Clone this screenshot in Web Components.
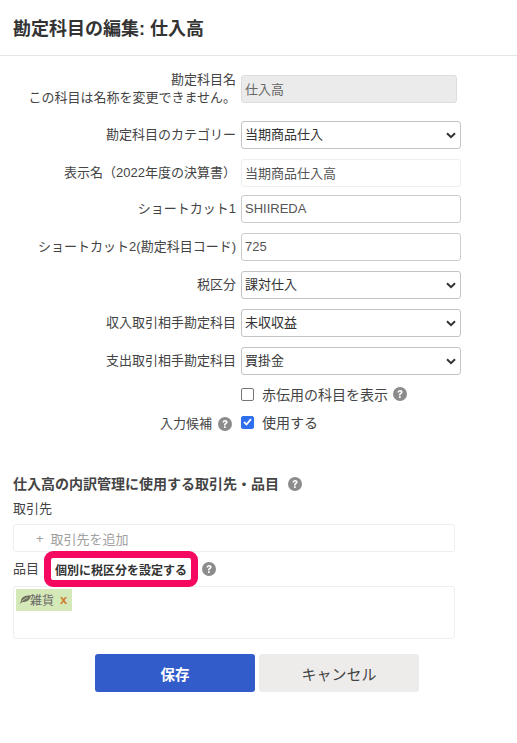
<!DOCTYPE html>
<html lang="ja">
<head>
<meta charset="utf-8">
<title>勘定科目の編集</title>
<style>
  html, body { margin: 0; background: #fff; }
  body {
    font-family: "Liberation Sans", "Noto Sans CJK JP", sans-serif;
    font-size: 13px;
    color: #333;
  }
</style>
</head>
<body>
<account-edit-page></account-edit-page>

<script>
const HELP_ICON = `<svg viewBox="0 0 14 14" width="14" height="14" aria-hidden="true">
  <circle cx="7" cy="7" r="7" fill="#8c8c8c"/>
  <path d="M4.500 5.500c0-1.600 1.100-2.500 2.600-2.500 1.500 0 2.500.9 2.500 2.100 0 1.100-.6 1.600-1.300 2-.5.3-.7.5-.7 1v.3H6v-.5c0-.9.400-1.300 1-1.700.5-.3.800-.6.800-1 0-.5-.3-.8-.8-.8-.6 0-.8.400-.9 1.100zM6 9.300h1.700V11H6z" fill="#fff"/>
</svg>`;

/** Ayuda: icono redondo con signo de interrogación */
class HelpIcon extends HTMLElement {
  connectedCallback() {
    if (this.shadowRoot) return;
    this.attachShadow({ mode: "open" }).innerHTML = `
      <style>
        :host { display: inline-flex; width: 14px; height: 14px; flex: none; }
      </style>
      ${HELP_ICON}`;
  }
}

/** Fila del formulario: etiqueta a la derecha + control */
class FormRow extends HTMLElement {
  connectedCallback() {
    if (this.shadowRoot) return;
    this.attachShadow({ mode: "open" }).innerHTML = `
      <style>
        :host { display: grid; grid-template-columns: 236px 1fr; column-gap: 5px; align-items: center; }
        .label { text-align: right; font-size: 13px; line-height: 18px; color: #444; }
      </style>
      <div class="label"><slot name="label"></slot></div>
      <div><slot></slot></div>`;
  }
}

class TextField extends HTMLElement {
  connectedCallback() {
    if (this.shadowRoot) return;
    const value = this.getAttribute("value") || "";
    const disabled = this.hasAttribute("disabled");
    const soft = this.hasAttribute("soft");
    this.attachShadow({ mode: "open" }).innerHTML = `
      <style>
        :host { display: block; }
        input {
          box-sizing: border-box; display: block; width: 100%; height: 28px; margin: 0;
          padding: 0 3px 2px; border: 1px solid ${soft ? "#eee" : "#ccc"}; border-radius: 3px;
          background: #fff; color: #555; outline: none;
          font: 13px "Liberation Sans", "Noto Sans CJK JP", sans-serif;
        }
        input:disabled { background: #ebebeb; border-color: #ddd; color: #666; }
      </style>
      <input type="text" value="${value}" ${disabled ? "disabled" : ""}>`;
  }
}

class SelectField extends HTMLElement {
  connectedCallback() {
    if (this.shadowRoot) return;
    const value = this.getAttribute("value") || "";
    this.attachShadow({ mode: "open" }).innerHTML = `
      <style>
        :host { display: block; position: relative; }
        select {
          box-sizing: border-box; display: block; width: 100%; height: 28px; margin: 0;
          padding: 0 3px 2px; appearance: none; border: 1px solid #c4c4c4; border-radius: 3px;
          background: #fff; color: #333; outline: none;
          font: 13px "Liberation Sans", "Noto Sans CJK JP", sans-serif;
        }
        svg { position: absolute; right: 5px; top: 11px; pointer-events: none; }
      </style>
      <select><option>${value}</option></select>
      <svg width="10" height="7" viewBox="0 0 10 7" aria-hidden="true">
        <path d="M1 1.200l4 4 4-4" fill="none" stroke="#333" stroke-width="2"/>
      </svg>`;
  }
}

class CheckField extends HTMLElement {
  connectedCallback() {
    if (this.shadowRoot) return;
    const checked = this.hasAttribute("checked");
    this.attachShadow({ mode: "open" }).innerHTML = `
      <style>
        :host { display: flex; align-items: center; gap: 8px; font-size: 14px; color: #444; height: 18px; }
        .box {
          box-sizing: border-box; width: 13px; height: 13px; border-radius: 2px; flex: none;
          border: 1px solid ${checked ? "#2f6fed" : "#767676"}; background: ${checked ? "#2f6fed" : "#fff"};
          display: flex; align-items: center; justify-content: center;
        }
        slot[name="help"]::slotted(*) { margin-left: -3px; }
      </style>
      <span class="box">${checked ? `<svg width="9" height="8" viewBox="0 0 9 8"><path d="M1 4l2.500 2.500L8 1.200" fill="none" stroke="#fff" stroke-width="1.800"/></svg>` : ""}</span>
      <span><slot></slot></span>
      <slot name="help"></slot>`;
  }
}

/** Etiqueta del item con hoja y aspa */
class ItemTag extends HTMLElement {
  connectedCallback() {
    if (this.shadowRoot) return;
    this.attachShadow({ mode: "open" }).innerHTML = `
      <style>
        :host {
          display: inline-flex; align-items: center; height: 22px; padding: 0 5px 1px 3px; box-sizing: border-box;
          background: #d5e8b8; font-size: 12px; color: #666;
        }
        svg { flex: none; }
        .x { margin-left: 6px; color: #cf7f2e; font-weight: 700; font-size: 13px; line-height: 1; }
      </style>
      <svg width="12" height="9" viewBox="0 0 12 9" aria-hidden="true">
        <path d="M.3 8.800C1 7.800 1.500 7 2 6.300 1.700 3 5 .5 11.800.3 11.400 4.600 8.500 7.400 3.800 6.900 2.800 7.300 1.500 8 .3 8.800z" fill="#6f6f60"/>
        <path d="M2.800 6.200C4.500 4.600 6.300 3.500 8.800 2.600" fill="none" stroke="#d5e8b8" stroke-width=".7"/>
      </svg>
      <span style="margin-left:-1px"><slot></slot></span>
      <span class="x">x</span>`;
  }
}

class AccountEditPage extends HTMLElement {
  connectedCallback() {
    if (this.shadowRoot) return;
    this.attachShadow({ mode: "open" }).innerHTML = `
      <style>
        :host { display: block; }
        header { height: 55px; border-bottom: 1px solid #e5e5e5; box-sizing: content-box; display: flex; align-items: center; padding-left: 13px; }
        h1 { margin: 0; font-size: 18px; font-weight: 700; color: #333; position: relative; top: -1px; }
        form-row { margin-bottom: 10px; }
        .form { padding: 15px 56px 0 0; }
        .top text-field { margin-right: 4px; }
        .section { padding: 0 62px 0 13px; }
        h2 { margin: 0; display: flex; align-items: center; gap: 9px; font-size: 14px; font-weight: 700; color: #444; line-height: 20px; }
        .sub { font-size: 13px; color: #444; line-height: 20px; }
        .box { box-sizing: border-box; border: 1px solid #eee; border-radius: 3px; background: #fff; }
        .add { height: 28px; display: flex; align-items: center; gap: 7px; padding-left: 22px; color: #a0a0a0; font-size: 13px; }
        .items { height: 53px; padding: 2px; }
        .item-row { display: flex; align-items: center; height: 34px; }
        .pill {
          box-sizing: border-box; width: 154px; height: 36px; display: inline-flex; align-items: center; justify-content: center;
          border: 7px solid #f5085f; border-radius: 9px; background: #fff; margin: 0 4px 0 5px;
          font-size: 12px; font-weight: 700; color: #333; white-space: nowrap;
        }
        .actions { display: flex; justify-content: center; gap: 4px; margin-top: 15px; padding: 0 3px 34px 0; }
        button {
          width: 160px; height: 38px; border: 0; border-radius: 3px; padding: 0;
          font-family: inherit; font-size: 15px;
        }
        .save { background: #325cc9; color: #fff; font-weight: 700; font-size: 14.500px; }
        .cancel { background: #eeeceb; color: #444; }
      </style>
      <header><h1>勘定科目の編集: 仕入高</h1></header>
      <div class="form">
        <form-row class="top" style="margin-bottom:14px">
          <span slot="label">勘定科目名<br>この科目は名称を変更できません。</span>
          <text-field value="仕入高" disabled></text-field>
        </form-row>
        <form-row><span slot="label">勘定科目のカテゴリー</span><select-field value="当期商品仕入"></select-field></form-row>
        <form-row style="margin-bottom:8px"><span slot="label">表示名（2022年度の決算書）</span><text-field value="当期商品仕入高" soft></text-field></form-row>
        <form-row><span slot="label">ショートカット1</span><text-field value="SHIIREDA"></text-field></form-row>
        <form-row><span slot="label">ショートカット2(勘定科目コード)</span><text-field value="725"></text-field></form-row>
        <form-row><span slot="label">税区分</span><select-field value="課対仕入"></select-field></form-row>
        <form-row><span slot="label">収入取引相手勘定科目</span><select-field value="未収収益"></select-field></form-row>
        <form-row><span slot="label">支出取引相手勘定科目</span><select-field value="買掛金"></select-field></form-row>
        <form-row style="margin-bottom:10px"><span slot="label"></span><check-field>赤伝用の科目を表示<help-icon slot="help"></help-icon></check-field></form-row>
        <form-row style="margin-bottom:0">
          <span slot="label" style="display:inline-flex;align-items:center;gap:6px;margin-right:4px;transform:translateY(2px)">入力候補<help-icon></help-icon></span>
          <check-field checked>使用する</check-field>
        </form-row>
      </div>
      <div class="section">
        <h2 style="margin-top:43px">仕入高の内訳管理に使用する取引先・品目<help-icon></help-icon></h2>
        <div class="sub" style="margin-top:5px">取引先</div>
        <div class="box add" style="margin-top:5px"><span>+</span><span>取引先を追加</span></div>
        <div class="item-row">
          <span class="sub">品目</span>
          <span class="pill">個別に税区分を設定する</span>
          <help-icon></help-icon>
        </div>
        <div class="box items"><item-tag>雑貨</item-tag></div>
      </div>
      <div class="actions">
        <button class="save" type="button">保存</button>
        <button class="cancel" type="button">キャンセル</button>
      </div>`;
  }
}

customElements.define("help-icon", HelpIcon);
customElements.define("form-row", FormRow);
customElements.define("text-field", TextField);
customElements.define("select-field", SelectField);
customElements.define("check-field", CheckField);
customElements.define("item-tag", ItemTag);
customElements.define("account-edit-page", AccountEditPage);
</script>
</body>
</html>
